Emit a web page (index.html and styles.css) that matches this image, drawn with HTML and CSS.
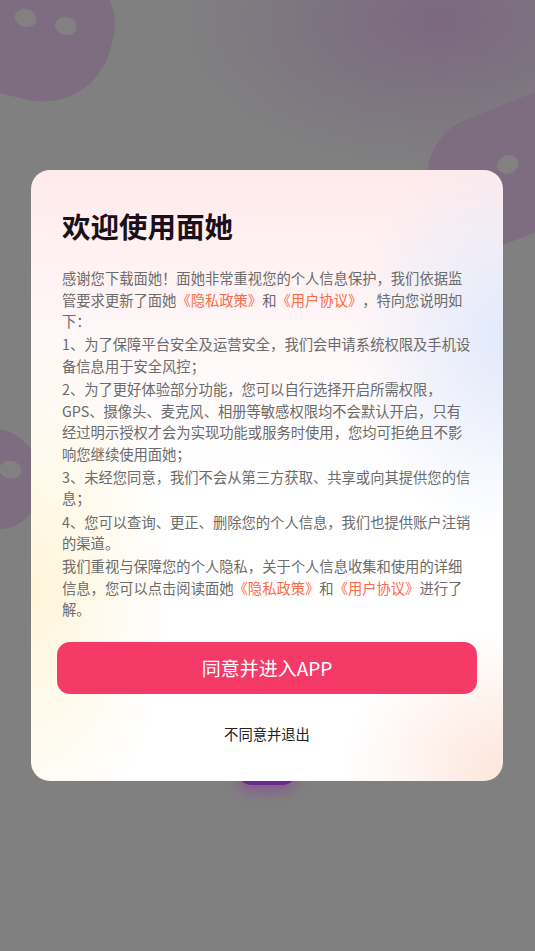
FILE: index.html
```html
<!DOCTYPE html>
<html lang="zh-CN">
<head>
<meta charset="utf-8">
<title>欢迎使用面她</title>
<link rel="stylesheet" href="styles.css">
</head>
<body>
<div class="screen">
  <div class="bg">
    <div class="tint"></div>
    <div class="blob blob-tl"><span class="dot d1"></span><span class="dot d2"></span></div>
    <div class="blob blob-tr"><span class="dot d3"></span><span class="dot d4"></span></div>
    <div class="blob blob-l"><span class="dot d5"></span></div>
    <div class="pill">领取加入</div>
  </div>
  <div class="overlay">
    <div class="card">
      <h1 class="title">欢迎使用面她</h1>
      <div class="body">
        <p>感谢您下载面她！面她非常重视您的个人信息保护，我们依据监管要求更新了面她<a class="link">《隐私政策》</a>和<a class="link">《用户协议》</a>，特向您说明如下：</p>
        <p>1、为了保障平台安全及运营安全，我们会申请系统权限及手机设备信息用于安全风控；</p>
        <p>2、为了更好体验部分功能，您可以自行选择开启所需权限，GPS、摄像头、麦克风、相册等敏感权限均不会默认开启，只有经过明示授权才会为实现功能或服务时使用，您均可拒绝且不影响您继续使用面她；</p>
        <p>3、未经您同意，我们不会从第三方获取、共享或向其提供您的信息；</p>
        <p>4、您可以查询、更正、删除您的个人信息，我们也提供账户注销的渠道。</p>
        <p>我们重视与保障您的个人隐私，关于个人信息收集和使用的详细信息，您可以点击阅读面她<a class="link">《隐私政策》</a>和<a class="link">《用户协议》</a>进行了解。</p>
      </div>
      <button class="agree">同意并进入APP</button>
      <div class="decline">不同意并退出</div>
    </div>
  </div>
</div>
</body>
</html>
```
FILE: styles.css
```css
* { box-sizing: border-box; }
html, body { margin: 0; padding: 0; }
body {
  font-family: "Noto Sans CJK SC", "Noto Sans", sans-serif;
  background: #808080;
  text-spacing-trim: space-all;
}
.screen {
  position: relative;
  width: 535px;
  height: 951px;
  overflow: hidden;
  background: #808080;
}
.bg { position: absolute; inset: 0; }
.tint {
  position: absolute; inset: 0;
  background:
    radial-gradient(ellipse 260px 150px at 440px 20px, rgba(122,96,128,0.75), rgba(128,128,128,0) 100%);
}
.blob {
  position: absolute;
  background: #7e6c80;
}
.blob-tl {
  left: -40px; top: -40px; width: 153px; height: 140px;
  border-radius: 20px 60px 70px 40px;
  transform: rotate(14deg);
}
.blob-tr {
  left: 428px; top: 108px; width: 160px; height: 130px;
  border-radius: 60px 20px 20px 20px;
  transform: rotate(-22deg);
}
.blob-l {
  left: -60px; top: 428px; width: 100px; height: 100px;
  border-radius: 20px 50px 40px 20px;
  transform: rotate(8deg);
}
.dot {
  position: absolute;
  width: 22px; height: 18px;
  border-radius: 50%;
  background: #828080;
}
.d1 { left: 52px; top: 52px; }
.d2 { left: 93px; top: 50px; }
.d3 { left: 72px; top: 48px; }
.d4 { left: 38px; top: 68px; }
.d5 { left: 58px; top: 30px; }
.pill {
  position: absolute;
  left: 238px; top: 758px;
  width: 58px; height: 27px;
  border-radius: 14px;
  background: #6a2a8c;
  color: #d9c4e6;
  font-size: 11px;
  line-height: 27px;
  text-align: center;
  box-shadow: 0 6px 14px rgba(140,60,160,0.6);
}
.overlay {
  position: relative;
  z-index: 2;
  height: 951px;
  display: flex;
  align-items: center;
  justify-content: center;
}
.card {
  width: 472px;
  margin-left: -1px;
  border-radius: 19px;
  padding: 36px 31px 37px;
  background:
    radial-gradient(ellipse 140px 260px at 0px 420px, rgba(255,244,214,0.9), rgba(255,255,255,0) 100%),
    radial-gradient(ellipse 150px 200px at 472px 170px, rgba(226,234,252,1), rgba(255,255,255,0) 100%),
    radial-gradient(ellipse 160px 140px at 472px 600px, rgba(253,230,220,1), rgba(255,255,255,0) 100%),
    linear-gradient(180deg, #ffeaeb 0px, #fff4f5 120px, #ffffff 300px, #ffffff 100%);
}
.title {
  margin: 0;
  font-size: 28.5px;
  line-height: 40px;
  font-weight: 700;
  color: #1b1019;
}
.body {
  margin-top: 21px;
  font-size: 14.3px;
  line-height: 21.5px;
  color: #6b6b6b;
}
.body p { margin: 0 0 1.8px; }
.body p:last-child { margin-bottom: 0; }
.link { color: #fb6b4a; display: inline-block; }
.agree {
  display: block;
  width: calc(100% + 10px);
  margin: 22px -5px 0;
  height: 52px;
  border: none;
  border-radius: 13px;
  background: #f53a68;
  color: #ffffff;
  font-family: inherit;
  font-size: 19px;
}
.decline {
  margin-top: 30px;
  text-align: center;
  font-size: 14.3px;
  line-height: 20px;
  color: #222222;
}
```
